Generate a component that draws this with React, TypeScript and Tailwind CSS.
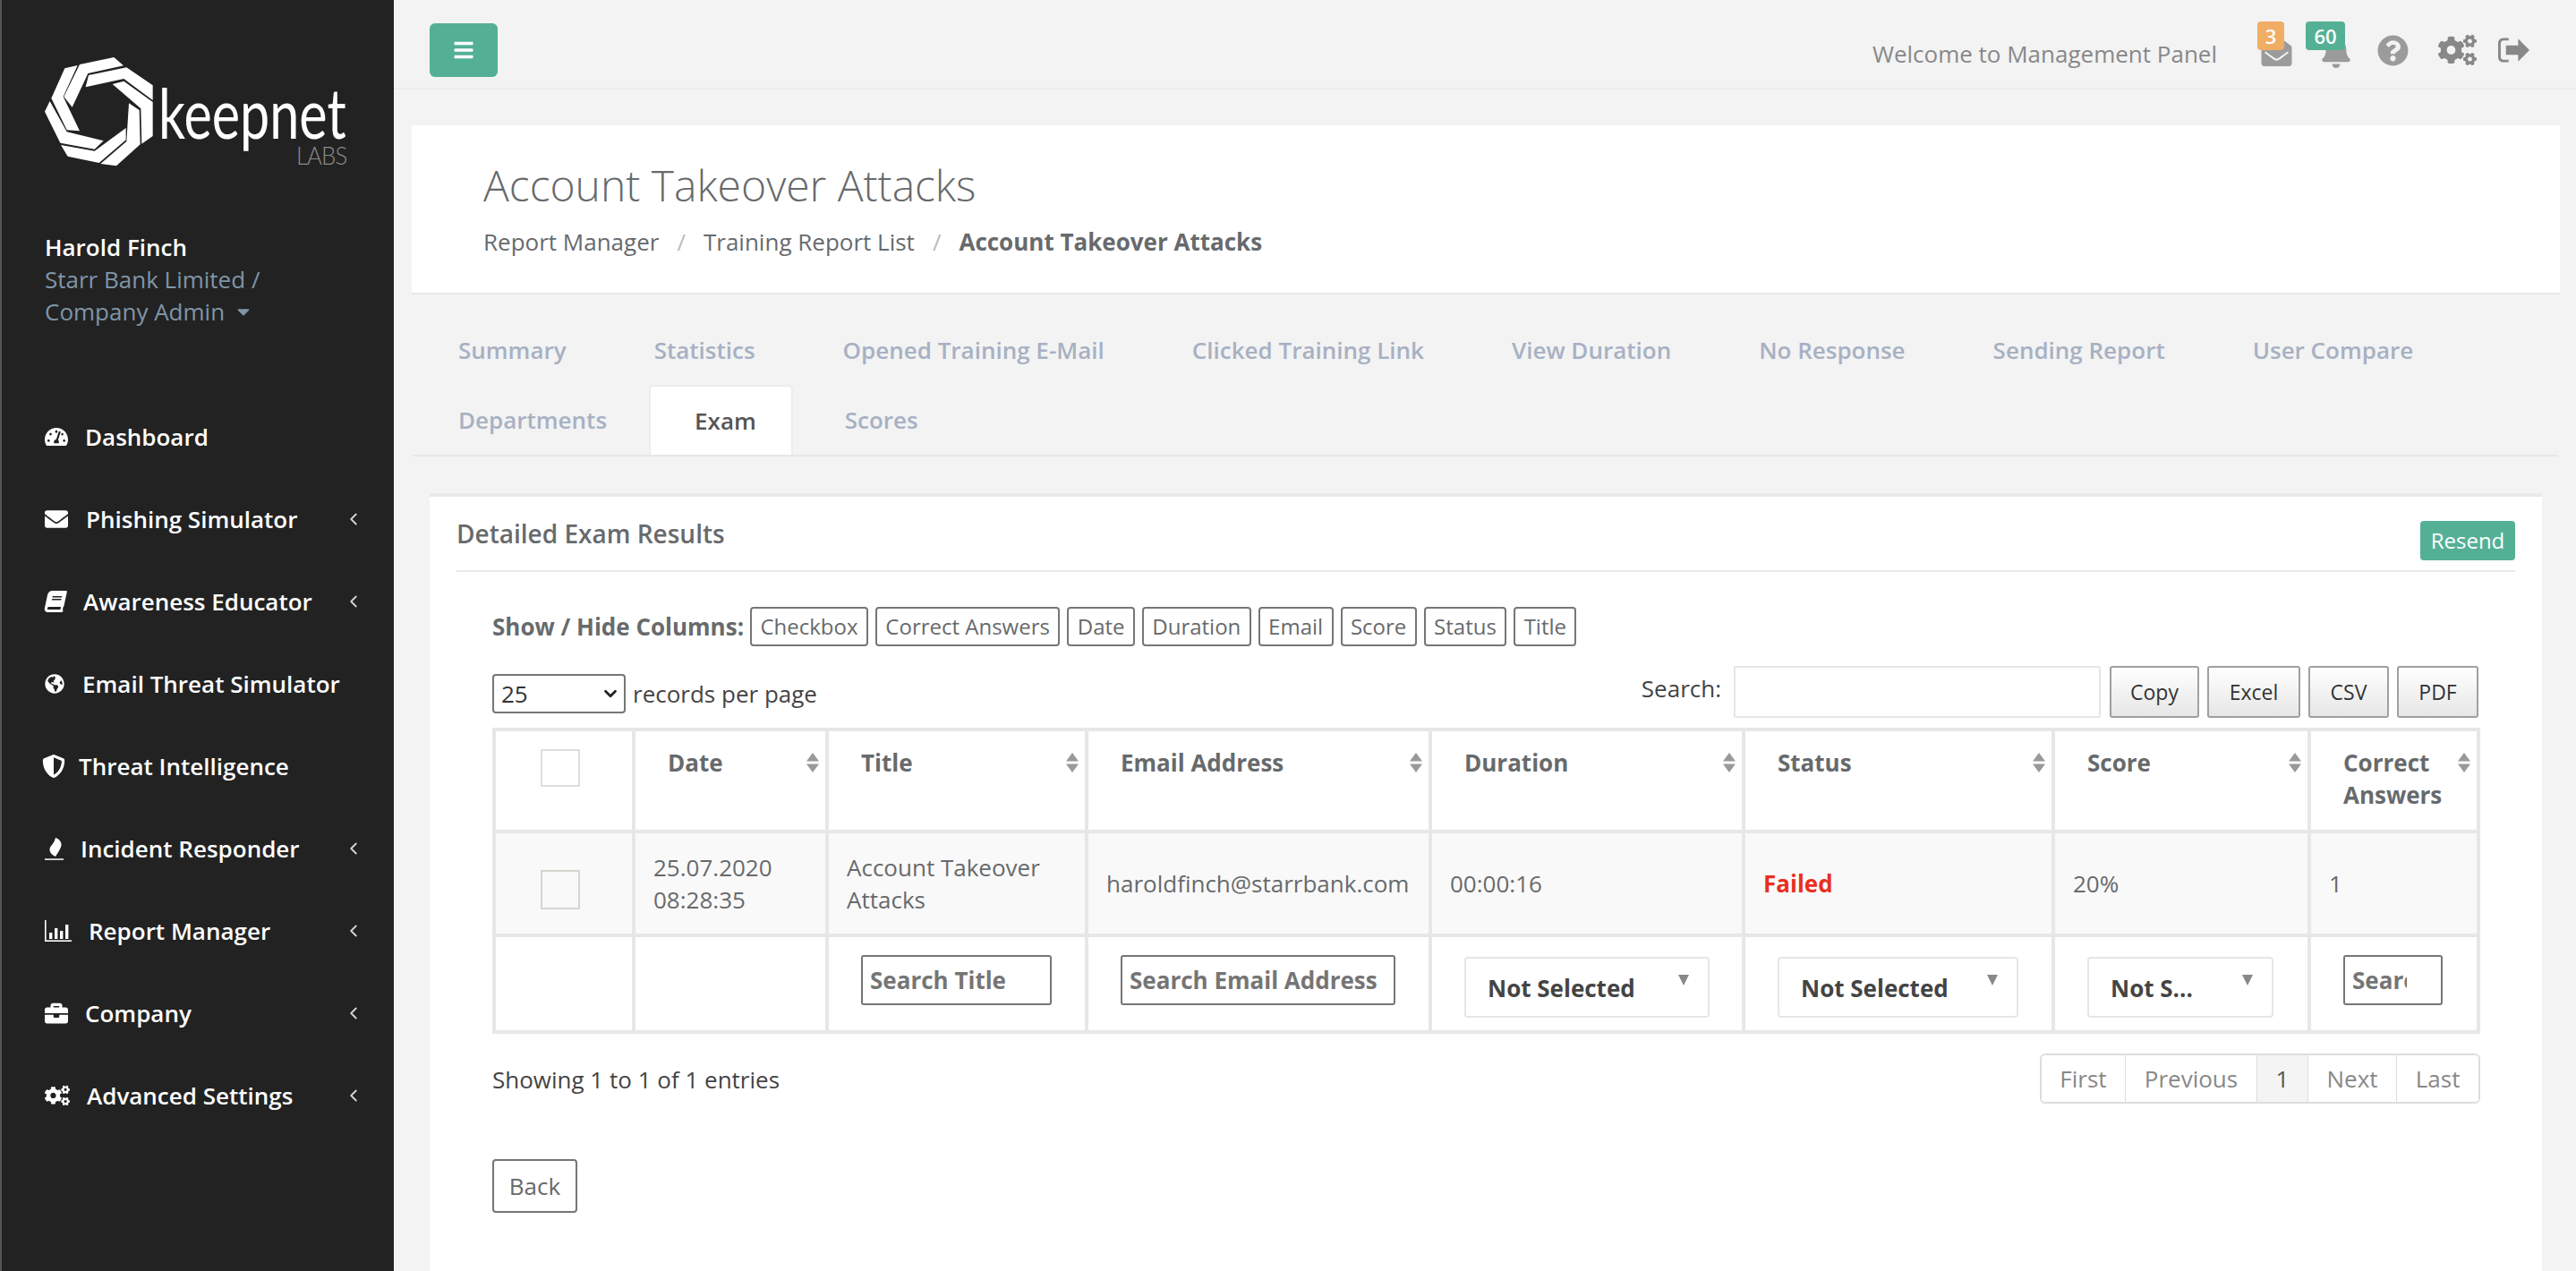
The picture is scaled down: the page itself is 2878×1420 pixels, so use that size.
import React from "react";
import { FaTachometerAlt, FaEnvelope, FaBook, FaGlobeAmericas, FaShieldAlt, FaBriefcase, FaCogs, FaBars, FaEnvelopeOpen, FaBell, FaQuestionCircle, FaCaretDown } from "react-icons/fa";
import { LuChevronLeft, LuChevronDown } from "react-icons/lu";

const Responder = ({ className }: { className?: string }) => (
  <svg viewBox="0 0 21 25" className={className} fill="currentColor">
    <path d="M12 0c4 1.500 6.500 4 6.500 7.500 0 3.500-2.500 7-6.500 13.500C8 19 5.500 16.500 5.500 13.500 5.500 8.500 10 8 12 0z" />
    <rect x="0" y="23.300" width="21" height="1.500" />
  </svg>
);

const Bars = ({ className }: { className?: string }) => (
  <svg viewBox="0 0 30 24" className={className} fill="currentColor">
    <rect x="0" y="0" width="1.600" height="24" />
    <rect x="0" y="22.400" width="30" height="1.600" />
    <rect x="5" y="14" width="3.400" height="7" />
    <rect x="11" y="9" width="3.400" height="12" />
    <rect x="17" y="12" width="3.400" height="9" />
    <rect x="23" y="5" width="3.400" height="16" />
  </svg>
);

const SignOut = ({ className }: { className?: string }) => (
  <svg viewBox="0 0 36 28" className={className} fill="currentColor">
    <path d="M12 0H6C2.500 0 0 2.500 0 6v16c0 3.500 2.500 6 6 6h6v-3H6c-1.700 0-3-1.300-3-3V6c0-1.700 1.300-3 3-3h6z" />
    <path d="M23 1l13 13-13 13v-7.500H9v-11h14z" />
  </svg>
);

const nav = [
  { label: "Dashboard", icon: <FaTachometerAlt className="w-[26px] h-[26px]" />, w: "w-[45px]", arrow: false },
  { label: "Phishing Simulator", icon: <FaEnvelope className="w-[26px] h-[26px]" />, w: "w-[46px]", arrow: true },
  { label: "Awareness Educator", icon: <FaBook className="w-[24px] h-[24px] -skew-x-12" />, w: "w-[43px]", arrow: true },
  { label: "Email Threat Simulator", icon: <FaGlobeAmericas className="w-[22px] h-[22px]" />, w: "w-[42px]", arrow: false },
  { label: "Threat Intelligence", icon: <FaShieldAlt className="-ml-[3px] w-[26px] h-[26px]" />, w: "w-[38px]", arrow: false },
  { label: "Incident Responder", icon: <Responder className="w-[21px] h-[25px]" />, w: "w-[40px]", arrow: true },
  { label: "Report Manager", icon: <Bars className="w-[30px] h-[24px]" />, w: "w-[49px]", arrow: true },
  { label: "Company", icon: <FaBriefcase className="w-[26px] h-[26px]" />, w: "w-[45px]", arrow: true },
  { label: "Advanced Settings", icon: <FaCogs className="w-[28px] h-[26px]" />, w: "w-[47px]", arrow: true },
];

const blades = [
  "135,42 250,18 282,46 163,72 110,185 82,150",
  "165,78 292,52 380,112 380,162 283,90 155,118",
  "245,108 283,98 380,168 380,282 343,308 340,190",
  "300,172 335,195 338,310 258,382 205,375 292,300",
  "290,255 290,295 200,372 95,350 72,312 185,332",
  "215,298 185,326 70,305 18,200 35,165 92,268",
  "135,265 92,262 40,155 85,55 128,45 80,150",
];

const Logo = () => (
  <div className="relative h-[122px] w-[342px]">
    <svg viewBox="0 0 408 408" className="absolute -left-[6px] -top-[6px] h-[136px] w-[136px]" fill="#fff">
      {blades.map((p) => <polygon key={p} points={p} />)}
    </svg>
    <span className="absolute left-[127px] top-[28px] origin-left scale-x-[0.76] font-['Lato',sans-serif] text-[78px] font-normal leading-[66px] text-white">keepnet</span>
    <span className="absolute left-[281px] top-[95px] origin-left scale-x-[0.92] font-['Lato',sans-serif] text-[28px] font-light leading-[28px] tracking-[-1px] text-[#8a8a8a]">LABS</span>
  </div>
);

const Sort = () => (
  <svg viewBox="0 0 16 22" className="absolute right-[6px] top-[24px] h-[22px] w-[16px]" fill="#999">
    <path d="M8 0l7 9.500H1zM1 12.500h14L8 22z" />
  </svg>
);

const Th = ({ w, children, pl = "pl-[36px]" }: { w: string; children: React.ReactNode; pl?: string }) => (
  <th className={`relative border-[4px] border-[#e7e7e7] ${w} ${pl} pr-[30px] pt-[17px] align-top text-left text-[26px] font-bold leading-[36px] text-[#676a6c]`}>
    {children}
    <Sort />
  </th>
);

const Td = ({ children, cls = "" }: { children?: React.ReactNode; cls?: string }) => (
  <td className={`border-[4px] border-[#e7e7e7] pl-[20px] align-middle text-[26px] leading-[36px] ${cls}`}>{children}</td>
);

const Sel = ({ w, label }: { w: string; label: string }) => (
  <div className={`relative ${w} mt-[8px] h-[68px] rounded-[4px] border-[2px] border-[#e5e6e7] bg-white pl-[24px] text-[26px] font-bold leading-[66px] text-[#444]`}>
    {label}
    <svg viewBox="0 0 12 12" className="absolute right-[21px] top-[18px] h-[12px] w-[12px]" fill="#888"><path d="M0 0h12L6 12z" /></svg>
  </div>
);

const Filter = ({ w, ph, pr = "pr-[8px]" }: { w: string; ph: string; pr?: string }) => (
  <input readOnly placeholder={ph} className={`${w} ${pr} mb-[8px] block h-[56px] rounded-[3px] border-[2px] border-[#767676] bg-white pl-[8px] font-['Open_Sans',sans-serif] text-[26px] font-bold text-[#676a6c] placeholder:text-[#757575]`} />
);

const Toggle = ({ children }: { children: React.ReactNode }) => (
  <span className="flex h-[44px] items-center rounded-[4px] border-[2px] border-[#767676] px-[9.4px] text-[24px] text-[#676a6c]">{children}</span>
);

const Dt = ({ w, children }: { w: string; children: React.ReactNode }) => (
  <span className={`flex h-[58px] ${w} items-center justify-center rounded-[3px] border-[2px] border-[#a0a0a0] bg-gradient-to-b from-white to-[#e6e6e6] text-[23px] text-[#333]`}>{children}</span>
);

const tabs = ["Summary", "Statistics", "Opened Training E-Mail", "Clicked Training Link", "View Duration", "No Response", "Sending Report", "User Compare", "Departments", "Exam", "Scores"];

export default function App() {
  return (
    <div className="flex h-[1420px] w-[2878px] overflow-hidden bg-[#f3f3f4] font-['Open_Sans',sans-serif] text-[#676a6c]">
      <aside className="h-full w-[440px] shrink-0 border-l-[2px] border-[#555] bg-[#222222] text-white">
        <div className="pl-[48px] pt-[64px]"><Logo /></div>
        <div className="pl-[48px] pt-[72px] text-[26px] leading-[36px]">
          <div className="font-semibold text-white">Harold Finch</div>
          <div className="text-[#8095a8]">Starr Bank Limited /</div>
          <div className="flex items-center gap-[10px] text-[#8095a8]">Company Admin <FaCaretDown className="h-[22px] w-[22px]" /></div>
        </div>
        <nav className="pt-[76px]">
          {nav.map((n) => (
            <div key={n.label} className="flex h-[92px] items-center pl-[48px] pr-[34px] text-[26px] font-semibold">
              <span className={`flex ${n.w} shrink-0 items-center`}>{n.icon}</span>
              <span className="flex-1 whitespace-nowrap">{n.label}</span>
              {n.arrow && <LuChevronLeft className="h-[22px] w-[22px] text-[#d5d5d5]" strokeWidth={2} />}
            </div>
          ))}
        </nav>
      </aside>

      <main className="flex min-w-0 flex-1 flex-col">
        <header className="flex h-[100px] shrink-0 items-start justify-between border-b-[2px] border-[#ededed] pl-[40px] pr-[52px]">
          <button className="mt-[26px] flex h-[60px] w-[76px] items-center justify-center rounded-[6px] bg-[#54b095] text-white"><FaBars className="h-[24px] w-[24px]" /></button>
          <div className="mt-[40px] flex h-[32px] items-center">
            <span className="mt-[8px] text-[26px] text-[#888]">Welcome to Management Panel</span>
            <div className="relative ml-[48px] h-[32px] w-[37px] text-[#9b9b9b]">
              <FaEnvelopeOpen className="absolute left-0 top-0 h-[34px] w-[37px]" />
              <span className="absolute -left-[3px] -top-[16px] flex h-[32px] w-[30px] items-center justify-center rounded-[4px] bg-[#f0ad64] text-[22px] font-semibold text-white">3</span>
            </div>
            <div className="relative ml-[31px] h-[32px] w-[34px] text-[#9b9b9b]">
              <FaBell className="absolute left-0 top-0 h-[36px] w-[34px]" />
              <span className="absolute -left-[17px] -top-[16px] flex h-[32px] w-[44px] items-center justify-center rounded-[4px] bg-[#54b095] text-[22px] font-semibold text-white">60</span>
            </div>
            <FaQuestionCircle className="ml-[29px] h-[35px] w-[35px] text-[#9b9b9b]" />
            <FaCogs className="ml-[33px] h-[38px] w-[43px] text-[#888]" />
            <SignOut className="ml-[24px] h-[28px] w-[35px] text-[#888]" />
          </div>
        </header>

        <section className="mr-[18px] ml-[20px] mt-[40px] h-[189px] shrink-0 border-b-[2px] border-[#e7eaec] bg-white pl-[80px] pt-[35px]">
          <h1 className="text-[48px] font-light leading-[64px] text-[#676a6c]">Account Takeover Attacks</h1>
          <div className="mt-[13px] flex items-center text-[26px] leading-[36px]">
            <span>Report Manager</span><span className="mx-[20px] text-[#bbb]">/</span>
            <span>Training Report List</span><span className="mx-[20px] text-[#bbb]">/</span>
            <span className="font-bold">Account Takeover Attacks</span>
          </div>
        </section>

        <div className="mx-[20px] mt-[23px] flex shrink-0 flex-wrap border-b-[2px] border-[#e7e7e7] pr-[80px] pl-[3px]">
          {tabs.map((t) => t === "Exam" ? (
            <div key={t} className="-mb-[2px] -ml-[2px] mr-[9px] flex h-[78px] items-center rounded-t-[6px] border-[2px] border-b-0 border-[#ececec] bg-white pl-[49px] pr-[39px] text-[26px] font-semibold text-[#555]">{t}</div>
          ) : (
            <div key={t} className="flex h-[78px] items-center px-[49px] text-[26px] font-semibold text-[#a7b1c2]">{t}</div>
          ))}
        </div>

        <section className="ml-[40px] mr-[38px] mt-[41px] flex-1 border-t-[4px] border-[#e7eaec] bg-white px-[30px]">
          <div className="flex h-[84px] items-center justify-between border-b-[2px] border-[#e7eaec]">
            <h2 className="text-[28px] font-semibold text-[#676a6c]">Detailed Exam Results</h2>
            <button className="mb-[11px] flex h-[44px] w-[106px] items-center justify-center self-end rounded-[4px] bg-[#54b095] text-[24px] text-white">Resend</button>
          </div>

          <div className="pl-[40px] pr-[39px]">
            <div className="mt-[39px] flex items-center gap-[8px]">
              <span className="mr-[-1px] text-[26px] font-bold">Show / Hide Columns:</span>
              {["Checkbox", "Correct Answers", "Date", "Duration", "Email", "Score", "Status", "Title"].map((c) => <Toggle key={c}>{c}</Toggle>)}
            </div>

            <div className="mt-[22px] flex h-[58px] items-start justify-between pr-[2px]">
              <div className="mt-[9px] flex items-center gap-[8px] text-[26px]">
                <div className="relative h-[44px] w-[149px]">
                  <select className="h-[44px] w-[149px] appearance-none rounded-[4px] border-[2px] border-[#767676] bg-white pl-[8px] font-['Open_Sans',sans-serif] text-[26px] text-[#333]">
                    <option>25</option>
                  </select>
                  <LuChevronDown className="pointer-events-none absolute right-[6px] top-[11px] h-[22px] w-[22px] text-[#222]" strokeWidth={3} />
                </div>
                <span className="text-[#444]">records per page</span>
              </div>
              <div className="flex items-start">
                <span className="mr-[14px] mt-[6px] text-[26px] text-[#444]">Search:</span>
                <input readOnly className="mr-[10px] h-[58px] w-[410px] rounded-[2px] border-[2px] border-[#e5e6e7] bg-white" />
                <div className="flex gap-[9px]"><Dt w="w-[100px]">Copy</Dt><Dt w="w-[104px]">Excel</Dt><Dt w="w-[90px]">CSV</Dt><Dt w="w-[91px]">PDF</Dt></div>
              </div>
            </div>

            <table className="mt-[11px] w-[2217px] table-fixed border-collapse">
              <thead>
                <tr className="h-[114px]">
                  <th className="w-[156px] border-[4px] border-[#e7e7e7] pt-[20px] align-top">
                    <span className="ml-[50px] block h-[42px] w-[44px] border-[2px] border-[#e0ddd8] bg-white" />
                  </th>
                  <Th w="w-[216px]">Date</Th>
                  <Th w="w-[290px]">Title</Th>
                  <Th w="w-[384px]">Email Address</Th>
                  <Th w="w-[350px]">Duration</Th>
                  <Th w="w-[346px]">Status</Th>
                  <Th w="w-[286px]">Score</Th>
                  <Th w="w-[189px]">Correct Answers</Th>
                </tr>
              </thead>
              <tbody>
                <tr className="h-[116px] bg-[#f9f9f9]">
                  <td className="border-[4px] border-[#e7e7e7] pt-[14px]"><span className="ml-[50px] block h-[44px] w-[44px] border-[2px] border-[#d8d5d0]" /></td>
                  <Td>25.07.2020<br />08:28:35</Td>
                  <Td>Account Takeover Attacks</Td>
                  <Td>haroldfinch@starrbank.com</Td>
                  <Td>00:00:16</Td>
                  <Td cls="font-bold text-[#e8301e]">Failed</Td>
                  <Td>20%</Td>
                  <Td>1</Td>
                </tr>
                <tr className="h-[108px]">
                  <td className="border-[4px] border-[#e7e7e7]" />
                  <td className="border-[4px] border-[#e7e7e7]" />
                  <td className="border-[4px] border-[#e7e7e7] pl-[36px]"><Filter w="w-[213px]" ph="Search Title" /></td>
                  <td className="border-[4px] border-[#e7e7e7] pl-[36px]"><Filter w="w-[307px]" ph="Search Email Address" /></td>
                  <td className="border-[4px] border-[#e7e7e7] pl-[36px]"><Sel w="w-[274px]" label="Not Selected" /></td>
                  <td className="border-[4px] border-[#e7e7e7] pl-[36px]"><Sel w="w-[269px]" label="Not Selected" /></td>
                  <td className="border-[4px] border-[#e7e7e7] pl-[36px]"><Sel w="w-[208px]" label="Not S..." /></td>
                  <td className="border-[4px] border-[#e7e7e7] pl-[36px]"><Filter w="w-[111px]" pr="pr-[38px]" ph="Search Correct Answers" /></td>
                </tr>
              </tbody>
            </table>

            <div className="mt-[22px] flex items-center justify-between">
              <span className="mt-[2px] text-[26px] text-[#444]">Showing 1 to 1 of 1 entries</span>
              <div className="flex h-[56px] overflow-hidden rounded-[6px] border-[2px] border-[#ddd] text-[26px] text-[#888]">
                {["First", "Previous", "1", "Next", "Last"].map((p) => (
                  <span key={p} className={`flex items-center border-l-[1px] border-[#ddd] px-[20.6px] first:border-l-0 ${p === "1" ? "bg-[#f4f4f4] text-[#555]" : "bg-white"}`}>{p}</span>
                ))}
              </div>
            </div>

            <button className="mt-[62px] flex h-[60px] w-[95px] items-center justify-center rounded-[4px] border-[2px] border-[#767676] bg-white text-[26px] text-[#676a6c]">Back</button>
          </div>
        </section>
      </main>
    </div>
  );
}
